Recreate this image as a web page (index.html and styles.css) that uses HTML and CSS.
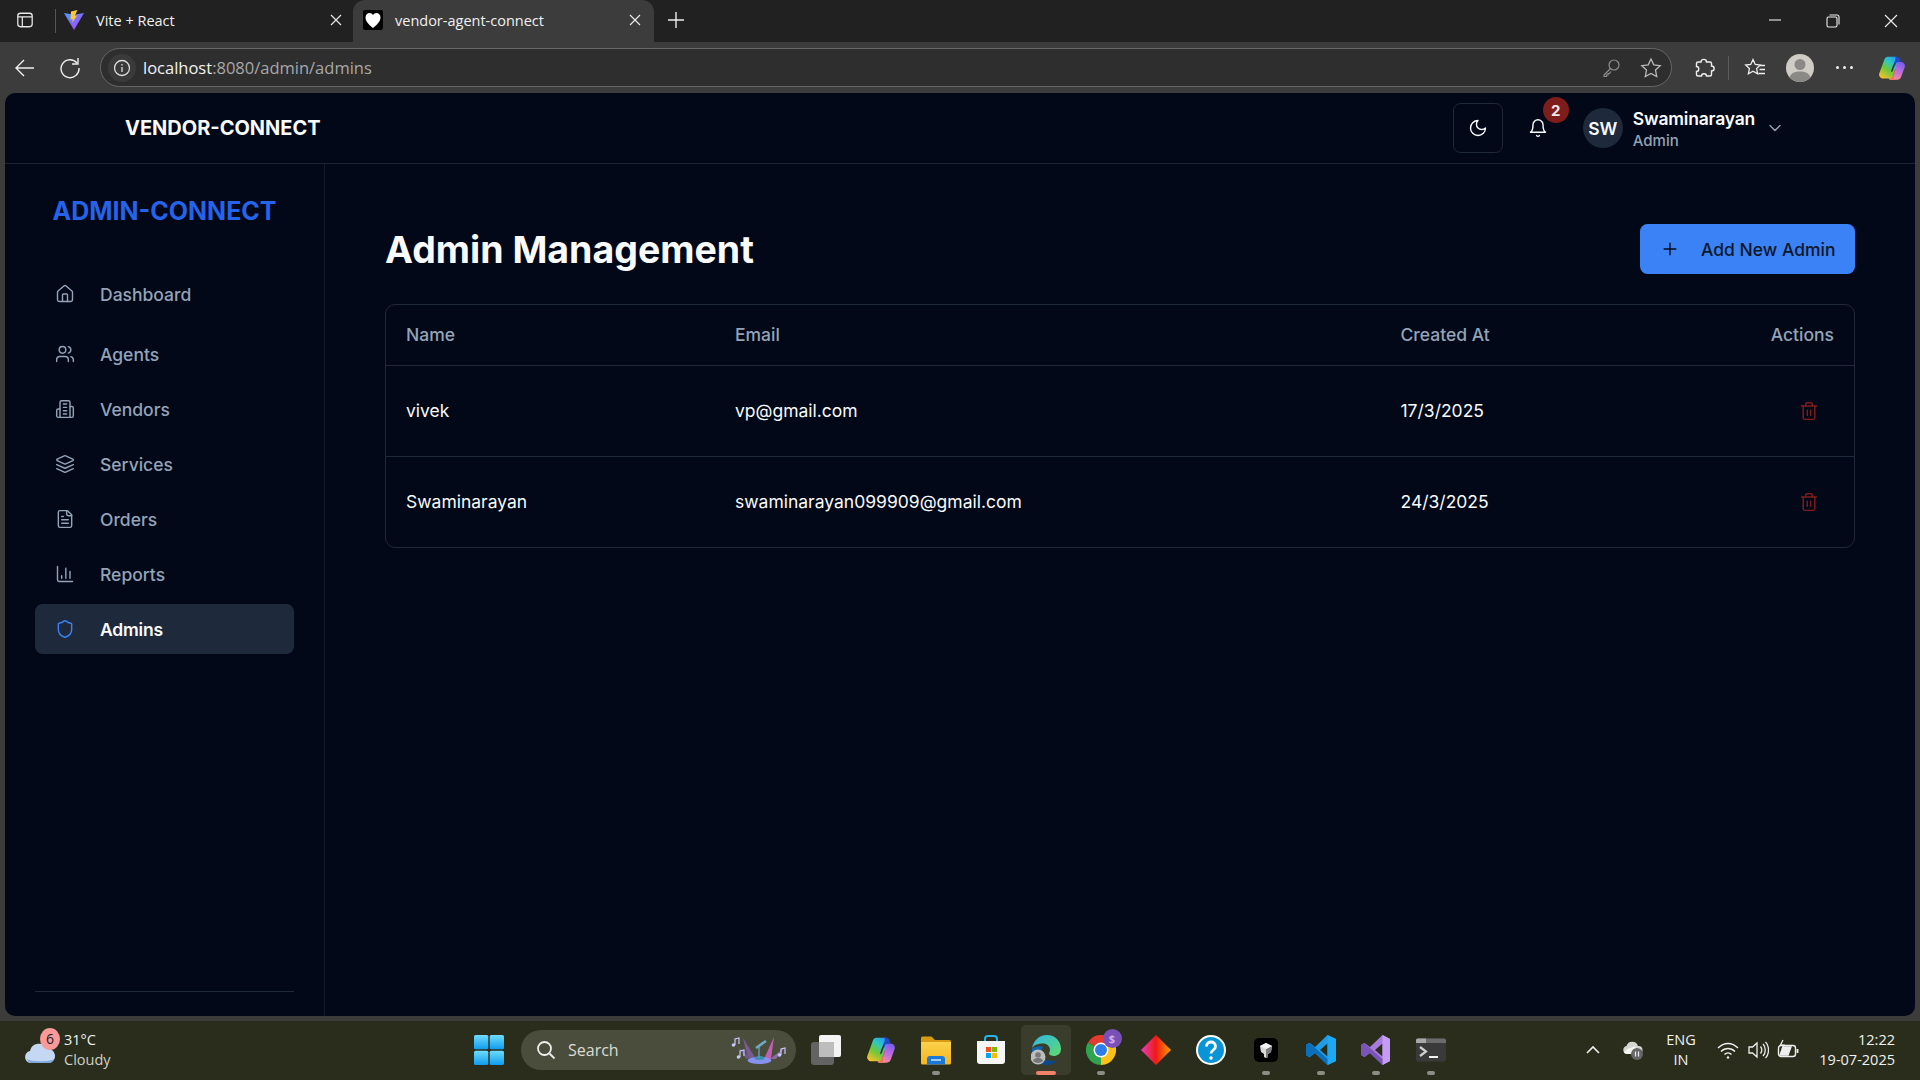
FILE: index.html
```html
<!DOCTYPE html>
<html lang="en">
<head>
<meta charset="utf-8">
<title>vendor-agent-connect</title>
<link rel="stylesheet" href="styles.css">
</head>
<body>
<svg class="defs" aria-hidden="true">
  <defs>
    <linearGradient id="cpA" x1="0.8" y1="0" x2="0.2" y2="1"><stop offset="0" stop-color="#2a9cf0"/><stop offset=".3" stop-color="#2fc8c0"/><stop offset=".6" stop-color="#6cc83c"/><stop offset="1" stop-color="#f8c02c"/></linearGradient>
    <linearGradient id="cpB" x1="0.7" y1="0" x2="0.3" y2="1"><stop offset="0" stop-color="#7a5cf0"/><stop offset=".5" stop-color="#c06ce0"/><stop offset="1" stop-color="#f89090"/></linearGradient>
    <linearGradient id="cpC" x1="0" y1="0" x2="0" y2="1"><stop offset="0" stop-color="#d83a30"/><stop offset="1" stop-color="#f87a60"/></linearGradient>
    <linearGradient id="edgeA" x1="0" y1="0" x2="1" y2="1"><stop offset="0" stop-color="#2fb6e8"/><stop offset="1" stop-color="#5fdc6a"/></linearGradient>
    <linearGradient id="edgeB" x1="0" y1="0" x2="1" y2="1"><stop offset="0" stop-color="#0f6bb8"/><stop offset="1" stop-color="#0a3f7a"/></linearGradient>
    <linearGradient id="dia" x1="0" y1="0" x2="1" y2="0"><stop offset="0" stop-color="#e840b8"/><stop offset=".5" stop-color="#f01818"/><stop offset="1" stop-color="#f8a000"/></linearGradient>
    <linearGradient id="win" x1="0" y1="0" x2="0" y2="1"><stop offset="0" stop-color="#6fdcfa"/><stop offset="1" stop-color="#0f9cf0"/></linearGradient>
    <linearGradient id="vite" x1="0" y1="0" x2="1" y2="1"><stop offset="0" stop-color="#41a6ff"/><stop offset="1" stop-color="#bd34fe"/></linearGradient>
    <linearGradient id="fold" x1="0" y1="0" x2="0" y2="1"><stop offset="0" stop-color="#fcd24a"/><stop offset="1" stop-color="#f4b420"/></linearGradient>
    <symbol id="copilot" viewBox="0 0 32 32">
      <path d="M26 9c3.500 0 5.500 3 4.500 6L26.500 26c-.8 2.500-3 3.500-5 3.500H13l4-12 3-8.500z" fill="url(#cpB)"/>
      <path d="M14 17h6l-2 8c-.7 2.500 1 4.500 3.500 4.500H15c-2.500 0-3.500-2-3-4z" fill="url(#cpC)"/>
      <path d="M11 3h9.500c2 0 3 1.500 2.500 3.200L17 25c-.6 2-2 3-4 3H6c-3.500 0-5.500-3-4.500-6L7 7c.7-2.500 2-4 4-4z" fill="url(#cpA)"/>
      <path d="M17 3h4c3 0 4.500 2.500 5 6h-3c-1 0-2 .5-2.500 2L19 15l-1-4 2-5c.6-1.700-.5-3-3-3z" fill="#2048d0"/>
      <path d="M17.500 12.500c.5-1.500 1-2 2-2-.3 2-1.500 6-2.500 8.500-.5 1-1 1.500-2 1.500.2-2 1.500-6 2.500-8z" fill="#3a3040"/>
    </symbol>
  </defs>
</svg>

<header class="tabbar">
  <div class="chrome-btn tab-toggle">
    <svg class="i18" viewBox="0 0 20 20" fill="none" stroke="#e8e8e8" stroke-width="1.400"><rect x="2" y="2.500" width="16" height="15" rx="3"/><path d="M2 6.500h16M7 6.500v11"/></svg>
  </div>
  <div class="tab-sep"></div>
  <div class="tab">
    <svg class="fav" viewBox="0 0 20 20"><path d="M0 3l10 1.800L20 3 10 20z" fill="url(#vite)"/><path d="M13.500 0L7 1.500l-.5 8 2.200-.5-.5 3.500 5-7-2.500.5z" fill="#fdc92c"/></svg>
    <span class="tab-title">Vite + React</span>
    <svg class="tab-x" viewBox="0 0 12 12" stroke="#e8e8e8" stroke-width="1.200"><path d="M1 1l10 10M11 1L1 11"/></svg>
  </div>
  <div class="tab tab-active">
    <svg class="fav" viewBox="0 0 20 20"><rect width="20" height="20" rx="2" fill="#000"/><path d="M10 18C5 14 2.500 11 2.500 7.500 2.500 4.500 4.500 3 6.500 3 8 3 9.300 3.800 10 5c.7-1.200 2-2 3.500-2 2 0 4 1.500 4 4.500C17.500 11 15 14 10 18z" fill="#fff"/></svg>
    <span class="tab-title">vendor-agent-connect</span>
    <svg class="tab-x" viewBox="0 0 12 12" stroke="#e8e8e8" stroke-width="1.200"><path d="M1 1l10 10M11 1L1 11"/></svg>
  </div>
  <div class="chrome-btn new-tab">
    <svg class="i18" viewBox="0 0 18 18" stroke="#eee" stroke-width="1.400"><path d="M9 1v16M1 9h16"/></svg>
  </div>
  <div class="win-controls">
    <div class="win-btn"><svg class="i14" viewBox="0 0 14 14" stroke="#eee" stroke-width="1.100"><path d="M1 6h12"/></svg></div>
    <div class="win-btn"><svg class="i14" viewBox="0 0 14 14" fill="none" stroke="#eee" stroke-width="1.100"><rect x="1" y="3" width="10" height="10" rx="1.500"/><path d="M3.500 1h7.500a2 2 0 0 1 2 2v7.500"/></svg></div>
    <div class="win-btn"><svg class="i14" viewBox="0 0 14 14" stroke="#eee" stroke-width="1.100"><path d="M1 1l12 12M13 1L1 13"/></svg></div>
  </div>
</header>

<div class="toolbar">
  <div class="chrome-btn nav-btn">
    <svg class="i22" viewBox="0 0 22 22" fill="none" stroke="#eee" stroke-width="1.400"><path d="M20 11H2M10 3l-8 8 8 8"/></svg>
  </div>
  <div class="chrome-btn nav-btn">
    <svg class="i22" viewBox="0 0 22 22" fill="none" stroke="#eee" stroke-width="1.400"><path d="M18 6a9 9 0 1 0 2 5"/><path d="M19 1v6h-6"/></svg>
  </div>
  <div class="urlbar">
    <div class="url-info">
      <svg class="i18" viewBox="0 0 18 18" fill="none" stroke="#ddd" stroke-width="1.300"><circle cx="9" cy="9" r="7.500"/><path d="M9 8v5M9 5v1.400"/></svg>
    </div>
    <div class="url-text"><span class="url-host">localhost</span>:8080/admin/admins</div>
    <svg class="i20 url-key" viewBox="0 0 20 20" fill="none" stroke="#8e8e8e" stroke-width="1.200"><circle cx="13" cy="7" r="5"/><path d="M9.500 10.500L3 17v1.500h2.500V17H7v-1.500h1.500l1.500-2"/></svg>
    <svg class="i22 url-star" viewBox="0 0 22 22" fill="none" stroke="#bbb" stroke-width="1.300"><path d="M11 2l2.800 5.900 6.400.8-4.700 4.400 1.200 6.400L11 16.400l-5.700 3.100 1.200-6.400L1.800 8.700l6.400-.8z"/></svg>
  </div>
  <div class="tool-group">
    <div class="tool tool-ext"><svg class="i22" viewBox="0 0 22 22" fill="none" stroke="#eee" stroke-width="1.400"><path d="M8 5C8 1.500 13.500 1.500 13.500 5H17a1.500 1.500 0 0 1 1.500 1.500V9c3.500 0 3.500 5 0 5v3.500A1.500 1.500 0 0 1 17 19h-3.500c0-3-5-3-5 0H5a1.500 1.500 0 0 1-1.500-1.500v-3c3 0 3-5 0-5v-3A1.500 1.500 0 0 1 5 5z"/></svg></div>
    <div class="tool tool-sep"><span class="sep-line"></span></div>
    <div class="tool tool-fav"><svg class="i22" viewBox="0 0 22 22" fill="none" stroke="#eee" stroke-width="1.300"><path d="M9 2.500l2.300 5 5 .6-3.700 3.500 1 5.100L9 14.200 4.400 16.700l1-5.100L1.700 8.100l5-.6zM15 8.500h6M15.500 12.500h5.500M14.500 16.500h6.500"/></svg></div>
    <div class="tool tool-profile">
      <svg class="profile" viewBox="0 0 28 28"><circle cx="14" cy="14" r="14" fill="#cfccc6"/><circle cx="14" cy="10.500" r="5.500" fill="#8b8985"/><path d="M3.500 23.500C5 19 9 17.500 14 17.500s9 1.500 10.500 6A14 14 0 0 1 14 28a14 14 0 0 1-10.500-4.500z" fill="#8b8985"/></svg>
    </div>
    <div class="tool tool-dots"><span class="dot"></span><span class="dot"></span><span class="dot"></span></div>
    <div class="tool tool-copilot"><svg class="i28"><use href="#copilot"/></svg></div>
  </div>
</div>

<div class="viewport">
  <div class="app">
    <div class="app-header">
      <div class="brand">VENDOR-CONNECT</div>
      <div class="header-actions">
        <button class="icon-btn icon-btn-outline">
          <svg class="lucide white" viewBox="0 0 24 24"><path d="M12 3a6 6 0 0 0 9 9 9 9 0 1 1-9-9Z"/></svg>
        </button>
        <button class="icon-btn">
          <svg class="lucide white" viewBox="0 0 24 24"><path d="M6 8a6 6 0 0 1 12 0c0 7 3 9 3 9H3s3-2 3-9"/><path d="M10.300 21a1.940 1.940 0 0 0 3.400 0"/></svg>
          <span class="badge">2</span>
        </button>
        <div class="user">
          <div class="avatar">SW</div>
          <div class="user-meta">
            <div class="user-name">Swaminarayan</div>
            <div class="user-role">Admin</div>
          </div>
          <svg class="lucide muted" viewBox="0 0 24 24"><path d="m6 9 6 6 6-6"/></svg>
        </div>
      </div>
    </div>
    <div class="app-body">
      <aside class="sidebar">
        <div class="logo">ADMIN-CONNECT</div>
        <nav class="nav">
          <a class="nav-item nav-first"><svg class="lucide" viewBox="0 0 24 24"><path d="M15 21v-8a1 1 0 0 0-1-1h-4a1 1 0 0 0-1 1v8"/><path d="M3 10a2 2 0 0 1 .709-1.528l7-5.999a2 2 0 0 1 2.582 0l7 5.999A2 2 0 0 1 21 10v9a2 2 0 0 1-2 2H5a2 2 0 0 1-2-2z"/></svg>Dashboard</a>
          <a class="nav-item"><svg class="lucide" viewBox="0 0 24 24"><path d="M16 21v-2a4 4 0 0 0-4-4H6a4 4 0 0 0-4 4v2"/><circle cx="9" cy="7" r="4"/><path d="M22 21v-2a4 4 0 0 0-3-3.870"/><path d="M16 3.130a4 4 0 0 1 0 7.750"/></svg>Agents</a>
          <a class="nav-item"><svg class="lucide" viewBox="0 0 24 24"><path d="M6 22V4a2 2 0 0 1 2-2h8a2 2 0 0 1 2 2v18Z"/><path d="M6 12H4a2 2 0 0 0-2 2v6a2 2 0 0 0 2 2h2"/><path d="M18 9h2a2 2 0 0 1 2 2v9a2 2 0 0 1-2 2h-2"/><path d="M10 6h4M10 10h4M10 14h4M10 18h4"/></svg>Vendors</a>
          <a class="nav-item"><svg class="lucide" viewBox="0 0 24 24"><path d="m12.830 2.180a2 2 0 0 0-1.660 0L2.600 6.080a1 1 0 0 0 0 1.830l8.580 3.910a2 2 0 0 0 1.660 0l8.580-3.900a1 1 0 0 0 0-1.830Z"/><path d="m22 17.650-9.170 4.160a2 2 0 0 1-1.660 0L2 17.650"/><path d="m22 12.650-9.170 4.160a2 2 0 0 1-1.660 0L2 12.650"/></svg>Services</a>
          <a class="nav-item"><svg class="lucide" viewBox="0 0 24 24"><path d="M15 2H6a2 2 0 0 0-2 2v16a2 2 0 0 0 2 2h12a2 2 0 0 0 2-2V7Z"/><path d="M14 2v4a2 2 0 0 0 2 2h4"/><path d="M10 9H8M16 13H8M16 17H8"/></svg>Orders</a>
          <a class="nav-item"><svg class="lucide" viewBox="0 0 24 24"><path d="M3 3v16a2 2 0 0 0 2 2h16"/><path d="M18 17V9M13 17V5M8 17v-3"/></svg>Reports</a>
          <a class="nav-item nav-active"><svg class="lucide blue" viewBox="0 0 24 24"><path d="M20 13c0 5-3.500 7.500-7.660 8.950a1 1 0 0 1-.670-.010C7.500 20.500 4 18 4 13V6a1 1 0 0 1 1-1c2 0 4.500-1.200 6.240-2.720a1.170 1.170 0 0 1 1.520 0C14.510 3.810 17 5 19 5a1 1 0 0 1 1 1z"/></svg>Admins</a>
        </nav>
        <div class="side-divider"></div>
      </aside>
      <main class="main">
        <div class="page-head">
          <h1 class="page-title">Admin Management</h1>
          <button class="primary-btn">
            <svg class="lucide dark" viewBox="0 0 24 24"><path d="M5 12h14M12 5v14"/></svg>
            Add New Admin
          </button>
        </div>
        <div class="card">
          <table class="table">
            <colgroup><col class="c-name"><col class="c-email"><col class="c-date"><col></colgroup>
            <thead>
              <tr><th>Name</th><th>Email</th><th>Created At</th><th class="right">Actions</th></tr>
            </thead>
            <tbody>
              <tr>
                <td>vivek</td><td>vp@gmail.com</td><td>17/3/2025</td>
                <td class="right"><button class="trash"><svg class="lucide red" viewBox="0 0 24 24"><path d="M3 6h18"/><path d="M19 6v14c0 1-1 2-2 2H7c-1 0-2-1-2-2V6"/><path d="M8 6V4c0-1 1-2 2-2h4c1 0 2 1 2 2v2"/><path d="M10 11v6M14 11v6"/></svg></button></td>
              </tr>
              <tr>
                <td>Swaminarayan</td><td>swaminarayan099909@gmail.com</td><td>24/3/2025</td>
                <td class="right"><button class="trash"><svg class="lucide red" viewBox="0 0 24 24"><path d="M3 6h18"/><path d="M19 6v14c0 1-1 2-2 2H7c-1 0-2-1-2-2V6"/><path d="M8 6V4c0-1 1-2 2-2h4c1 0 2 1 2 2v2"/><path d="M10 11v6M14 11v6"/></svg></button></td>
              </tr>
            </tbody>
          </table>
        </div>
      </main>
    </div>
  </div>
</div>

<footer class="taskbar">
  <div class="tb-left">
    <div class="weather-icon">
      <svg class="cloud" viewBox="0 0 32 24"><path d="M7 23a6 6 0 0 1-1-11.900A9 9 0 0 1 23 9a7 7 0 0 1 2 14z" fill="#c4d8f4"/><path d="M3 19c3 3 24 3 27 0-1 3-3 4-5 4H7c-2 0-3-1-4-4z" fill="#7fa8dc"/></svg>
      <span class="weather-badge">6</span>
    </div>
    <div class="weather-text"><div>31°C</div><div class="weather-sub">Cloudy</div></div>
  </div>
  <div class="tb-center">
    <div class="tb-item">
      <svg class="i30" viewBox="0 0 30 30"><rect x="0" y="0" width="14.300" height="14.300" rx="1.500" fill="url(#win)"/><rect x="15.700" y="0" width="14.300" height="14.300" rx="1.500" fill="url(#win)"/><rect x="0" y="15.700" width="14.300" height="14.300" rx="1.500" fill="url(#win)"/><rect x="15.700" y="15.700" width="14.300" height="14.300" rx="1.500" fill="url(#win)"/></svg>
    </div>
    <div class="tb-search">
      <svg class="i20" viewBox="0 0 20 20" fill="none" stroke="#eee" stroke-width="1.800"><circle cx="8.500" cy="8.500" r="6.500"/><path d="M13.500 13.500l5 5"/></svg>
      <span class="search-label">Search</span>
      <svg class="search-art" viewBox="0 0 60 30">
        <path d="M13 3l13 21h-8z" fill="#7a5a90"/><path d="M8 12l14 12h-6z" fill="#6a5a80"/>
        <path d="M44 2L34 24h7z" fill="#c060b0"/><path d="M55 12L40 24h6z" fill="#8a6aa0"/>
        <ellipse cx="29.500" cy="25.500" rx="12" ry="3.500" fill="#8a90f0"/><ellipse cx="29.500" cy="23" rx="5" ry="2" fill="#3a90b0"/>
        <path d="M29 23V12" stroke="#5a9ab8" stroke-width="1.500"/><path d="M26 13l10-7" stroke="#70aac8" stroke-width="2.500"/>
        <path d="M5 10V4l4-1v6M10 22v-6l4-1v6M51 20v-6l4-1v6" fill="none" stroke="#c8c8f8" stroke-width="1.200"/>
        <circle cx="3.500" cy="10" r="1.800" fill="#c8c8f8"/><circle cx="8.500" cy="22" r="1.800" fill="#c8c8f8"/><circle cx="49.500" cy="20" r="1.800" fill="#c8c8f8"/>
      </svg>
    </div>
    <div class="tb-item">
      <svg class="i30" viewBox="0 0 30 30"><rect x="0" y="7" width="23" height="23" rx="3" fill="#636363"/><rect x="8" y="0" width="22" height="22" rx="2" fill="#f4f4f4"/><rect x="8" y="7" width="15" height="15" fill="#bdbdbd"/></svg>
    </div>
    <div class="tb-item"><svg class="i30"><use href="#copilot"/></svg></div>
    <div class="tb-item">
      <svg class="i30" viewBox="0 0 30 30"><path d="M0 3a1.500 1.500 0 0 1 1.500-1.500h9L14 5h14.500A1.500 1.500 0 0 1 30 6.500V9H0z" fill="#d99a14"/><path d="M0 7h30v21a1.500 1.500 0 0 1-1.500 1.500h-27A1.500 1.500 0 0 1 0 28z" fill="url(#fold)"/><path d="M6 29.500V24a3 3 0 0 1 3-3h12a3 3 0 0 1 3 3v5.500z" fill="#1c78d8"/><path d="M10 25h10" stroke="#bfe0fa" stroke-width="1.600"/></svg>
      <span class="run-dot"></span>
    </div>
    <div class="tb-item">
      <svg class="i30" viewBox="0 0 30 30"><path d="M9 7V4a3 3 0 0 1 3-3h6a3 3 0 0 1 3 3v3" fill="none" stroke="#24b4e8" stroke-width="2"/><path d="M1 6h28v20a3 3 0 0 1-3 3H4a3 3 0 0 1-3-3z" fill="#f6f6f6"/><rect x="10" y="12" width="5" height="5" fill="#f25022"/><rect x="16" y="12" width="5" height="5" fill="#7fba00"/><rect x="10" y="18" width="5" height="5" fill="#00a4ef"/><rect x="16" y="18" width="5" height="5" fill="#ffb900"/></svg>
    </div>
    <div class="tb-item tb-active">
      <svg class="i30" viewBox="0 0 30 30"><path d="M1 14C2 6 8 0 16 0c8 0 14 6 14 14 0 5-4 7-7 7-2.500 0-5-1-5-2.500 0-1 1-1.500 1-3.500 0-4-3.500-6.500-6.500-6.500C7 8.500 2 10 1 14z" fill="url(#edgeA)"/><path d="M1 14c-.5 8 5.500 16 15 16 4 0 8-1.800 10-5-2 1-9 2-13-1.500-3-3-3.500-8-.5-11.500-5-2-10 .5-11.500 2z" fill="url(#edgeB)"/><circle cx="7" cy="22" r="7.500" fill="#bdbdbd"/><circle cx="7" cy="20" r="2.800" fill="#777"/><path d="M2 26c1-3 3-3 5-3s4 0 5 3a7 7 0 0 1-10 0z" fill="#777"/></svg>
      <span class="run-bar"></span>
    </div>
    <div class="tb-item">
      <svg class="i30" viewBox="0 0 30 30"><path d="M15 15L2 7.500a15 15 0 0 1 26 0z" fill="#e33b2e"/><path d="M15 15l13-7.500A15 15 0 0 1 15 30z" fill="#fbc116"/><path d="M15 15v15A15 15 0 0 1 2 7.500z" fill="#2ea44f"/><circle cx="15" cy="15" r="7.500" fill="#fff"/><circle cx="15" cy="15" r="6" fill="#2f7de8"/></svg>
      <span class="chrome-badge">$</span>
      <span class="run-dot"></span>
    </div>
    <div class="tb-item">
      <svg class="i30" viewBox="0 0 30 30"><path d="M15 0l15 15-15 15L0 15z" fill="url(#dia)"/></svg>
    </div>
    <div class="tb-item">
      <svg class="i30" viewBox="0 0 30 30"><circle cx="15" cy="15" r="15" fill="#fff"/><circle cx="15" cy="15" r="13" fill="#0a94d8"/><path d="M10.500 11.500c0-6 9-6 9 0 0 3.500-4.500 3.500-4.500 7" fill="none" stroke="#fff" stroke-width="2.800"/><circle cx="15" cy="23" r="1.800" fill="#fff"/></svg>
    </div>
    <div class="tb-item">
      <svg class="i24" viewBox="0 0 24 24"><rect width="24" height="24" rx="5" fill="#000"/><path d="M6 8l6-3 6 3-1 6-3 2v3l-2 1-2-1v-3l-3-2z" fill="#d8d8d8"/><path d="M12 11l6-3-1 6-3 2v3l-2 1z" fill="#7c7c7c"/><path d="M6 8l6 3 6-3-6-3z" fill="#f4f4f4"/></svg>
      <span class="run-dot"></span>
    </div>
    <div class="tb-item">
      <svg class="i30" viewBox="0 0 30 30"><path d="M21.500 0L30 4v22l-8.500 4L9 18l-5.500 4.300L0 20V10l3.500-2.300L9 12zM21.500 8.500L14 15l7.500 6.500z" fill="#1f9ce8"/><path d="M21.500 0L30 4v22l-8.500 4z" fill="#1ea7f2"/><path d="M0 10l3.500-2.300L21.500 24v6L9 18l-5.500 4.300L0 20z" fill="#0a70bd"/></svg>
      <span class="run-dot"></span>
    </div>
    <div class="tb-item">
      <svg class="i30" viewBox="0 0 30 30"><path d="M21.500 0L29 4v22l-7.500 4L9 18l-5.500 4L0 20V10l3.500-2L9 12z" fill="#a87cdc"/><path d="M21.500 8.500L14 15l7.500 6.500z" fill="#2a2d1b"/><path d="M21.500 0L29 4v22l-7.500 4z" fill="#c79cf4"/><path d="M0 10l3.500-2L21.500 24v6L9 18l-5.500 4L0 20z" fill="#7a54b8"/></svg>
      <span class="run-dot"></span>
    </div>
    <div class="tb-item">
      <svg class="i30" viewBox="0 0 30 24"><rect width="30" height="23" y=".5" rx="2" fill="#3a3a3a"/><path d="M0 2.500a2 2 0 0 1 2-2h26a2 2 0 0 1 2 2V5H0z" fill="#6b6b6b"/><path d="M0 2.500a2 2 0 0 1 2-2h8V5H0z" fill="#a8a8a8"/><path d="M4 9l6 4.500L4 18" fill="none" stroke="#d0d0d0" stroke-width="2.200"/><path d="M13 19h9" stroke="#f0f0f0" stroke-width="2"/></svg>
      <span class="run-dot"></span>
    </div>
  </div>
  <div class="tb-right">
    <div class="tray tray-chevron"><svg class="i16" viewBox="0 0 16 16" fill="none" stroke="#eee" stroke-width="1.600"><path d="M2 11l6-6 6 6"/></svg></div>
    <div class="tray tray-cloud">
      <svg class="i20" viewBox="0 0 20 20"><path d="M4 14a4 4 0 0 1-.5-7.900A6 6 0 0 1 15 6a4 4 0 0 1 1 8z" fill="#d6d6d0"/><path d="M1 12c3-4 8-4 11-6 2 3 1 8-1 8H4c-1.500 0-2.500-.8-3-2z" fill="#f4f4f0"/><circle cx="14" cy="14" r="6" fill="#666"/><path d="M12.500 11.500v5M15.500 11.500v5" stroke="#eee" stroke-width="1.200"/></svg>
    </div>
    <div class="tray-lang"><div>ENG</div><div>IN</div></div>
    <div class="tray tray-w30"><svg class="i22" viewBox="0 0 22 22" fill="none" stroke="#eee" stroke-width="1.400"><path d="M1 9c6-6 14-6 20 0M4 12.500c4-4 10-4 14 0M7.500 15.500c2-2 5-2 7 0"/><circle cx="11" cy="18.500" r="1.200" fill="#eee" stroke="none"/></svg></div>
    <div class="tray tray-w30"><svg class="i22" viewBox="0 0 22 22" fill="none" stroke="#eee" stroke-width="1.300"><path d="M2 8v6h3.500L10 18V4L5.500 8zM13.500 7.500c1.500 2 1.500 5 0 7M16 5c3 3 3 9 0 12M18.500 3c4 4 4 12 0 16"/></svg></div>
    <div class="tray tray-w30"><svg class="i22" viewBox="0 0 22 22" fill="none" stroke="#eee" stroke-width="1.400"><rect x="1.500" y="6.500" width="17" height="11" rx="2.500"/><path d="M20.500 10v4" stroke-width="1.800"/><path d="M3 16h8l3-8H6z" fill="#eee"/><path d="M6 1L3.500 6H7L5 10" stroke-width="1.200"/></svg></div>
    <div class="clock"><div>12:22</div><div>19-07-2025</div></div>
  </div>
</footer>
</body>
</html>
```

FILE: styles.css
```css
* { box-sizing: border-box; }
html, body { margin: 0; padding: 0; height: 100%; }
body {
  width: 1920px;
  height: 1080px;
  overflow: hidden;
  display: flex;
  flex-direction: column;
  background: #3c3c3a;
  font-family: "Inter", "Liberation Sans", sans-serif;
  color: #f8fafc;
}
button { font: inherit; color: inherit; border: 0; background: none; padding: 0; }
svg { display: block; flex: none; }
.defs { position: absolute; width: 0; height: 0; }
.i14 { width: 14px; height: 14px; }
.i16 { width: 16px; height: 16px; }
.i18 { width: 18px; height: 18px; }
.i20 { width: 20px; height: 20px; }
.i22 { width: 22px; height: 22px; }
.i24 { width: 24px; height: 24px; }
.i28 { width: 28px; height: 28px; }
.i30 { width: 30px; height: 30px; }

/* browser tabs */
.tabbar {
  height: 42px;
  flex: none;
  display: flex;
  align-items: stretch;
  background: #212121;
  padding-left: 5px;
  font-family: "Open Sans", "Liberation Sans", sans-serif;
  font-size: 14.5px;
  color: #f0f0f0;
}
.chrome-btn { display: flex; align-items: center; justify-content: center; }
.tab-toggle { width: 40px; padding-bottom: 2px; }
.tab-sep { width: 1px; height: 24px; margin: 9px 0 0 10px; background: #555; }
.tab {
  display: flex;
  align-items: center;
  width: 294px;
  padding: 0 5.500px 2px 8px;
  margin-right: 3px;
}
.tab-active {
  width: 301px;
  margin-right: 0;
  padding: 0 10px 2px 10px;
  background: #3c3c3c;
  border-radius: 12px 12px 0 0;
}
.fav { width: 20px; height: 20px; }
.tab-title { flex: 1; margin-left: 12px; white-space: nowrap; }
.tab-x { width: 12px; height: 12px; margin-right: 3px; }
.new-tab { width: 44px; padding-bottom: 2px; }
.win-controls { margin-left: auto; display: flex; }
.win-btn { width: 58px; display: flex; align-items: center; justify-content: center; }

/* browser toolbar */
.toolbar {
  height: 51px;
  flex: none;
  display: flex;
  align-items: center;
  background: #3c3c3c;
  padding-left: 5px;
  font-family: "Open Sans", "Liberation Sans", sans-serif;
}
.nav-btn { width: 40px; height: 40px; margin-right: 5px; }
.urlbar {
  width: 1572px;
  height: 39px;
  margin-left: 5px;
  display: flex;
  align-items: center;
  background: #2e2e2e;
  border: 1px solid #666;
  border-radius: 20px;
  padding: 0 7px;
}
.url-info {
  width: 28px;
  height: 28px;
  border-radius: 50%;
  background: #3a3a3a;
  display: flex;
  align-items: center;
  justify-content: center;
}
.url-text { margin-left: 7px; font-size: 16.5px; color: #a8a8a8; flex: 1; white-space: nowrap; }
.url-host { color: #f2f2f2; }
.url-key { margin-right: 19px; }
.url-star { margin-right: 2px; }
.tool-group { display: flex; align-items: center; margin-left: 10px; height: 40px; }
.tool { display: flex; align-items: center; justify-content: center; }
.tool-ext { width: 44px; }
.tool-sep { width: 5px; }
.sep-line { width: 1px; height: 24px; background: #5c5c5c; }
.tool-fav { width: 48px; }
.tool-profile { width: 42px; }
.profile { width: 28px; height: 28px; }
.tool-dots { width: 47px; gap: 4px; }
.dot { width: 3px; height: 3px; border-radius: 50%; background: #eee; }
.tool-copilot { width: 48px; }

/* app */
.viewport { flex: none; height: 923px; padding: 0 5px; }
.app {
  height: 100%;
  display: flex;
  flex-direction: column;
  background: #020817;
  border-radius: 10px;
  overflow: hidden;
}
.app-header {
  height: 71px;
  flex: none;
  display: flex;
  align-items: center;
  justify-content: space-between;
  padding: 0 130px 0 120px;
  border-bottom: 1px solid #1a2435;
}
.brand { font-size: 20px; font-weight: 700; color: #f8fafc; margin-bottom: 1px; }
.header-actions { display: flex; align-items: center; }
.icon-btn {
  position: relative;
  width: 50px;
  height: 50px;
  margin-right: 10px;
  border-radius: 7.5px;
  display: flex;
  align-items: center;
  justify-content: center;
}
.icon-btn-outline { border: 1px solid #1e293b; }
.badge {
  position: absolute;
  top: -6px;
  right: -6px;
  width: 26px;
  height: 26px;
  border-radius: 50%;
  background: #7f1d1d;
  font-size: 15px;
  font-weight: 700;
  color: #f1e6e6;
  display: flex;
  align-items: center;
  justify-content: center;
}
.lucide {
  width: 20px;
  height: 20px;
  fill: none;
  stroke: currentColor;
  stroke-width: 1.700;
  stroke-linecap: round;
  stroke-linejoin: round;
}
.white { color: #f8fafc; }
.muted { color: #94a3b8; }
.blue { color: #3b82f6; }
.dark { color: #020817; }
.red { color: #7f1d1d; }
.user { display: flex; align-items: center; gap: 10px; margin-left: 10px; }
.avatar {
  width: 40px;
  height: 40px;
  border-radius: 50%;
  background: #1e293b;
  display: flex;
  align-items: center;
  justify-content: center;
  font-size: 17.5px;
  font-weight: 600;
}
.user-meta { padding-top: 4px; }
.user-name { font-size: 17.5px; font-weight: 600; letter-spacing: -.2px; line-height: 22px; }
.user-role { font-size: 15px; font-weight: 500; line-height: 22px; color: #94a3b8; }
.app-body { flex: 1; display: flex; min-height: 0; }
.sidebar {
  width: 320px;
  flex: none;
  display: flex;
  flex-direction: column;
  padding: 30px 30px 24px;
  border-right: 1px solid #111a2b;
}
.logo { font-size: 25px; font-weight: 700; line-height: 35px; color: #2563eb; text-align: center; }
.nav { display: flex; flex-direction: column; gap: 5px; margin-top: 40px; }
.nav-item {
  height: 50px;
  display: flex;
  align-items: center;
  gap: 25px;
  padding-left: 20px;
  border-radius: 7.5px;
  font-size: 17.5px;
  font-weight: 500;
  color: #94a3b8;
}
.nav-first { margin-bottom: 5px; }
.nav-active { background: #1e293b; color: #f8fafc; font-weight: 600; letter-spacing: -.2px; }
.side-divider { height: 1px; margin-top: auto; background: #1e293b; }
.main { flex: 1; padding: 60px; min-width: 0; }
.page-head { display: flex; align-items: center; justify-content: space-between; margin-bottom: 30px; }
.page-title { margin: 0; padding-top: 2px; font-size: 37.5px; line-height: 48px; font-weight: 700; }
.primary-btn {
  height: 50px;
  width: 215px;
  display: flex;
  align-items: center;
  gap: 21px;
  padding-left: 20px;
  border-radius: 7.5px;
  background: #3b82f6;
  color: #0f172a;
  font-size: 17.5px;
  font-weight: 500;
}
.card { border: 1px solid #1e293b; border-radius: 10px; overflow: hidden; }
.table { width: 100%; border-collapse: collapse; table-layout: fixed; font-size: 17.5px; }
.c-name { width: 329px; }
.c-email { width: 665.5px; }
.c-date { width: 300px; }
.table th {
  height: 60px;
  padding: 0 20px;
  text-align: left;
  font-weight: 500;
  color: #94a3b8;
  border-bottom: 1px solid #1e293b;
}
.table td { height: 91px; padding: 0 20px; color: #f8fafc; border-bottom: 1px solid #1e293b; }
.table tr:last-child td { border-bottom: 0; height: 91px; }
.table .right { text-align: right; }
.trash { width: 50px; height: 50px; display: inline-flex; align-items: center; justify-content: center; vertical-align: middle; }

/* taskbar */
.taskbar {
  height: 59px;
  margin-top: 5px;
  padding-bottom: 2px;
  flex: none;
  display: grid;
  grid-template-columns: 1fr auto 1fr;
  align-items: center;
  background: #2a2d1b;
  font-family: "Open Sans", "Liberation Sans", sans-serif;
  color: #f0f0f0;
  font-size: 14.5px;
}
.tb-left { display: flex; align-items: center; padding-left: 24px; }
.weather-icon { position: relative; width: 32px; height: 24px; margin-top: 4px; }
.cloud { width: 32px; height: 24px; }
.weather-badge {
  position: absolute;
  top: -12px;
  left: 16px;
  width: 20px;
  height: 22px;
  border-radius: 50%;
  background: #f89a9a;
  color: #1a1a1a;
  font-size: 14px;
  display: flex;
  align-items: center;
  justify-content: center;
}
.weather-text { margin-left: 8px; line-height: 20px; }
.weather-sub { color: #d0d0c8; }
.tb-center { display: flex; align-items: center; }
.tb-item {
  position: relative;
  width: 55px;
  height: 50px;
  display: flex;
  align-items: center;
  justify-content: center;
}
.tb-active { background: #3a3d2c; border-radius: 5px; width: 50px; margin: 0 2.500px; }
.tb-search {
  width: 275px;
  height: 40px;
  margin: 0 2.500px 0 4.500px;
  display: flex;
  align-items: center;
  padding: 0 6px 0 15px;
  background: #4a4d3b;
  border-radius: 20px;
}
.search-label { margin-left: 12px; flex: 1; font-size: 16px; color: #dcdcd4; }
.search-art { width: 60px; height: 30px; }
.run-dot {
  position: absolute;
  bottom: 0;
  left: 50%;
  width: 8px;
  height: 4px;
  margin-left: -4px;
  border-radius: 2px;
  background: #8d8d85;
}
.run-bar {
  position: absolute;
  bottom: 0;
  left: 50%;
  width: 20px;
  height: 4px;
  margin-left: -10px;
  border-radius: 2px;
  background: #f0806a;
}
.chrome-badge {
  position: absolute;
  top: 4px;
  left: 29px;
  width: 19px;
  height: 19px;
  border-radius: 50%;
  background: #7a50b8;
  color: #c9b3ec;
  font-size: 11px;
  font-weight: 700;
  display: flex;
  align-items: center;
  justify-content: center;
}
.tb-right { display: flex; align-items: center; justify-content: flex-end; padding-right: 25px; }
.tray { display: flex; align-items: center; justify-content: center; }
.tray-chevron { width: 48px; }
.tray-cloud { width: 32px; }
.tray-lang { width: 64px; text-align: center; line-height: 20px; }
.tray-w30 { width: 30px; }
.clock { width: 92px; text-align: right; line-height: 20px; }
```
